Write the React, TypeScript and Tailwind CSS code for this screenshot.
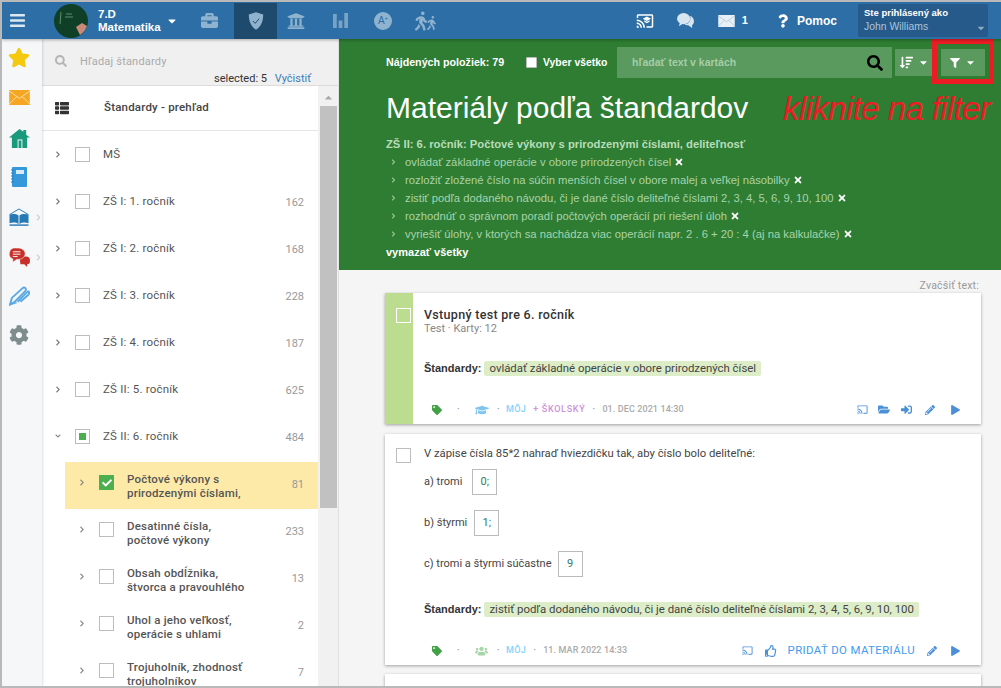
import React from 'react';
import {
  FaBars, FaBriefcase, FaUniversity, FaStar, FaCog,
  FaTag, FaGraduationCap, FaFolderOpen, FaSignInAlt, FaPencilAlt, FaPlay, FaUsers, FaFilter, FaThList,
  FaSearch, FaTimes, FaQuestion, FaCaretDown, FaCheck, FaChevronRight, FaChevronDown, FaWalking,
  FaSortAmountDown, FaRegThumbsUp, FaCaretUp,
} from 'react-icons/fa';
import { MdCast, MdCastForEducation } from 'react-icons/md';

const sans = { fontFamily: '"Liberation Sans", Arial, sans-serif' };

function Avatar() {
  return (
    <svg viewBox="0 0 34 34" className="w-[34px] h-[34px] shrink-0">
      <circle cx="17" cy="17" r="17" fill="#0f3f26" />
      <path d="M7 8 L6 20 M11 13 h8 M12 10 h6" stroke="#5f8f70" strokeWidth="1" fill="none" />
      <path d="M22 23 L28 19 L33 22 A17 17 0 0 1 26 31 Z" fill="#c98a7a" />
    </svg>
  );
}

function ShieldIcon() {
  return (
    <svg viewBox="0 0 20 24" className="w-[16px] h-[20px]">
      <path d="M10 1 L19 4 C19 13 16 19 10 23 C4 19 1 13 1 4 Z" fill="#8fb3cf" />
      <path d="M6 12 l3 3 l5 -6" stroke="#1e4a6e" strokeWidth="1.2" fill="none" />
    </svg>
  );
}

function BarsIcon() {
  return (
    <svg viewBox="0 0 16 16" className="w-[15px] h-[15px]" fill="#77a3c7">
      <rect x="0" y="1" width="4" height="15" />
      <rect x="6" y="8" width="4" height="8" />
      <rect x="12" y="0" width="4" height="16" />
    </svg>
  );
}

function GradeIcon() {
  return (
    <div className="w-[18px] h-[18px] rounded-full bg-[#8fb3cf] flex items-center justify-center text-[10px] leading-none text-[#2c6ea5]" style={sans}>
      A<sup className="text-[6px]">+</sup>
    </div>
  );
}

function MailIcon({ className, fill, line }: { className: string; fill: string; line: string }) {
  return (
    <svg viewBox="0 0 22 16" className={className}>
      <rect width="22" height="16" fill={fill} />
      <path d="M0 1 L11 9 L22 1 M0 15 L8 7 M22 15 L14 7" stroke={line} strokeWidth="1" fill="none" />
    </svg>
  );
}

function HomeIcon() {
  return (
    <svg viewBox="0 0 22 22" className="w-[21px] h-[21px]">
      <path d="M11 1 L15 4 V2 h3 V7 L22 10 H19 V21 H3 V10 H0 Z" fill="#1a9a7c" />
      <rect x="9" y="12" width="5" height="9" fill="#f5f7f9" />
      <rect x="10" y="13" width="3" height="8" fill="#1a9a7c" />
    </svg>
  );
}

function NotebookIcon() {
  return (
    <svg viewBox="0 0 16 20" className="w-[16px] h-[20px]">
      <rect x="1" y="0" width="15" height="20" rx="1" fill="#3498db" />
      <rect x="5" y="3" width="8" height="4" fill="#d6ebf8" />
      <path d="M0 3 h3 M0 6 h3 M0 9 h3 M0 12 h3 M0 15 h3" stroke="#2a7fb8" strokeWidth="1" />
    </svg>
  );
}

function BookIcon() {
  return (
    <svg viewBox="0 0 22 20" className="w-[22px] h-[19px]">
      <path d="M1 7 L11 1 L21 7" stroke="#2579b5" strokeWidth="1" fill="none" />
      <path d="M1 7 C4 6 8 6 10.5 8 V17 C8 15 4 15 1 16 Z M21 7 C18 6 14 6 11.5 8 V17 C14 15 18 15 21 16 Z" fill="#2579b5" />
      <path d="M1 18 h20" stroke="#2579b5" strokeWidth="1.5" />
    </svg>
  );
}

function TalkIcon() {
  return (
    <svg viewBox="0 0 22 20" className="w-[21px] h-[19px]">
      <path d="M11 9 h7 a4 4 0 0 1 4 4 v1 a3 3 0 0 1 -3 3 v3 l-3 -3 h-4 Z" fill="#c8312a" />
      <path d="M7 0 h3 a7 6 0 0 1 0 12 h-2 l-4 3 v-3.5 a6 6 0 0 1 3 -11.5 Z" fill="#c8312a" stroke="#f5f7f9" strokeWidth="0.6" />
      <path d="M4 4 h8 M4 6.5 h8 M4 9 h5" stroke="#fff" strokeWidth="1" />
    </svg>
  );
}

function PenIcon() {
  return (
    <svg viewBox="0 0 22 20" className="w-[21px] h-[20px]" fill="none" stroke="#5aa9e6">
      <path d="M1 19 L3 12 L14 2 C16 0 19 2 17 5 L6 16 Z" strokeWidth="2" />
      <path d="M9 16 L19 6 C21 4 22 7 20 9 L12 16" strokeWidth="2" />
      <path d="M1 19 L8 17" strokeWidth="1.5" />
    </svg>
  );
}

function TalkBubbles() {
  return (
    <svg viewBox="0 0 18 16" className="w-[17px] h-[15px] mr-[24px]" fill="#d7e5f0">
      <ellipse cx="7" cy="6" rx="7" ry="6" />
      <path d="M3 10 L2 14 L7 11 Z" />
      <path d="M14 3 C17 4 18 7 18 9 C18 11 17 12 16 13 L16 16 L12 13 C10 13 9 13 8 12 C12 12 15 9 14 3 Z" />
    </svg>
  );
}

function HeaderTab({ active, width, children }: { active?: boolean; width: string; children: React.ReactNode }) {
  return (
    <div className={`${width} h-[36px] flex items-center justify-center ${active ? 'bg-[#1e4a6e]' : ''}`}>
      {children}
    </div>
  );
}

function Header() {
  return (
    <div className="h-[37px] bg-[#2c6ea5] flex items-center text-white shrink-0 shadow-[0_1px_3px_rgba(0,0,0,0.3)] z-10 relative" style={sans}>
      <div className="w-[52px] pl-[7px]"><FaBars className="w-[17px] h-[17px] text-[#dbe7f1]" /></div>
      <Avatar />
      <div className="ml-[10px] w-[66px] text-[11.5px] font-bold leading-[13px] whitespace-nowrap">
        <div>7.D</div>
        <div>Matematika</div>
      </div>
      <FaCaretDown className="w-[12px] h-[12px] ml-[2px] mr-[10px]" />
      <div className="w-[46px] h-[36px] flex items-center">
        <FaBriefcase className="w-[17px] h-[17px] text-[#8fb3cf] ml-[13px]" />
      </div>
      <HeaderTab active width="w-[43px]"><ShieldIcon /></HeaderTab>
      <HeaderTab width="w-[38px]"><FaUniversity className="w-[18px] h-[18px] text-[#8fb3cf]" /></HeaderTab>
      <HeaderTab width="w-[50px]"><BarsIcon /></HeaderTab>
      <HeaderTab width="w-[36px]"><GradeIcon /></HeaderTab>
      <HeaderTab width="w-[48px]">
        <FaWalking className="w-[12px] h-[20px] text-[#8fb3cf]" />
        <FaWalking className="w-[9px] h-[14px] text-[#8fb3cf] mt-[5px]" />
      </HeaderTab>
      <div className="ml-auto flex items-center">
        <MdCastForEducation className="w-[18px] h-[18px] mr-[23px]" />
        <TalkBubbles />
        <MailIcon className="w-[17px] h-[12px] mr-[7px]" fill="#e8f0f6" line="#a9c5db" />
        <span className="text-[11px] font-bold mr-[30px]">1</span>
        <FaQuestion className="w-[10px] h-[14px] mr-[9px]" />
        <span className="text-[12px] font-bold mr-[21px]">Pomoc</span>
        <div className="w-[130px] h-[33px] mr-[13px] bg-[#255a8a] rounded-[2px] px-[6px] relative">
          <div className="text-[9.5px] font-bold leading-[12px] pt-[3px]">Ste prihlásený ako</div>
          <div className="text-[10.4px] leading-[14px] text-[#a9c5db] pt-[1px]">John Williams</div>
          <FaCaretDown className="absolute right-[2px] bottom-[4px] w-[10px] h-[10px] text-[#8fa9bf]" />
        </div>
      </div>
    </div>
  );
}

function RailItem({ height, more, children }: { height: string; more?: boolean; children: React.ReactNode }) {
  return (
    <div className={`${height} w-full flex items-center justify-center relative`}>
      {children}
      {more && <FaChevronRight className="absolute right-[-5px] w-[5px] h-[7px] text-[#ccc]" />}
    </div>
  );
}

function Rail() {
  return (
    <div className="w-[40px] shrink-0 bg-[#f5f7f9] flex flex-col shadow-[1px_0_2px_rgba(0,0,0,0.12)] z-[1] pr-[6px]">
      <RailItem height="h-[37px]"><FaStar className="w-[22px] h-[21px] text-[#f5c910]" /></RailItem>
      <RailItem height="h-[42px]"><MailIcon className="w-[21px] h-[15px]" fill="#f5a623" line="#fde3b5" /></RailItem>
      <RailItem height="h-[40px]"><HomeIcon /></RailItem>
      <RailItem height="h-[38px]"><NotebookIcon /></RailItem>
      <RailItem height="h-[42px]" more><BookIcon /></RailItem>
      <RailItem height="h-[38px]" more><TalkIcon /></RailItem>
      <RailItem height="h-[40px]"><PenIcon /></RailItem>
      <RailItem height="h-[38px]"><FaCog className="w-[20px] h-[20px] text-[#7f8c8d]" /></RailItem>
    </div>
  );
}

function Box({ checked, partial }: { checked?: boolean; partial?: boolean }) {
  if (checked) {
    return (
      <div className="w-[15px] h-[15px] bg-[#4caf50] flex items-center justify-center shrink-0">
        <FaCheck className="w-[10px] h-[10px] text-white" />
      </div>
    );
  }
  return (
    <div className="w-[15px] h-[15px] border border-[#bdbdbd] bg-white flex items-center justify-center shrink-0">
      {partial && <div className="w-[7px] h-[7px] bg-[#4caf50]" />}
    </div>
  );
}

const grades = [
  { label: 'MŠ', count: '' },
  { label: 'ZŠ I: 1. ročník', count: '162' },
  { label: 'ZŠ I: 2. ročník', count: '168' },
  { label: 'ZŠ I: 3. ročník', count: '228' },
  { label: 'ZŠ I: 4. ročník', count: '187' },
  { label: 'ZŠ II: 5. ročník', count: '625' },
];

const topics = [
  { lines: ['Počtové výkony s', 'prirodzenými číslami,'], count: '81', active: true },
  { lines: ['Desatinné čísla,', 'počtové výkony'], count: '233' },
  { lines: ['Obsah obdĺžnika,', 'štvorca a pravouhlého'], count: '13' },
  { lines: ['Uhol a jeho veľkosť,', 'operácie s uhlami'], count: '2' },
  { lines: ['Trojuholník, zhodnosť', 'trojuholníkov'], count: '7' },
];

function GradeRow({ label, count, open, partial }: { label: string; count: string; open?: boolean; partial?: boolean }) {
  return (
    <div className="h-[47px] flex items-start pl-[13px] pr-[14px] pt-[16px]">
      {open
        ? <FaChevronDown className="w-[6px] h-[6px] mt-[4px] text-[#777] mr-[14px]" />
        : <FaChevronRight className="w-[6px] h-[7px] mt-[4px] text-[#777] mr-[14px]" />}
      <Box partial={partial} />
      <span className="ml-[13px] text-[11.5px] leading-[14px] text-[#555] tracking-[0.2px]">{label}</span>
      <span className="ml-auto text-[11px] leading-[14px] mt-[2px] text-[#999]">{count}</span>
    </div>
  );
}

function TopicRow({ lines, count, active }: { lines: string[]; count: string; active?: boolean }) {
  return (
    <div className={`h-[47px] ml-[23px] flex items-start pl-[14px] pr-[14px] pt-[10px] ${active ? 'bg-[#fdeaa8]' : ''}`}>
      <FaChevronRight className="w-[6px] h-[7px] mt-[7px] text-[#888] mr-[14px]" />
      <div className="mt-[3px]"><Box checked={active} /></div>
      <div className="ml-[13px] text-[11.5px] font-medium leading-[14px] text-[#555] tracking-[0.2px]">
        {lines.map(l => <div key={l}>{l}</div>)}
      </div>
      <span className="ml-auto mt-[6px] text-[11px] leading-[14px] text-[#999]">{count}</span>
    </div>
  );
}

function Sidebar() {
  return (
    <div className="w-[297px] shrink-0 flex flex-col bg-white border-r border-[#e0e0e0]" style={{ fontFamily: 'Roboto, sans-serif' }}>
      <div className="h-[47px] bg-[#f0f0f0] border-b border-[#dcdcdc] relative shrink-0">
        <FaSearch className="absolute left-[13px] top-[16px] w-[12px] h-[12px] text-[#b5b5b5]" />
        <div className="absolute left-[38px] top-[16px] text-[11px] leading-[14px] text-[#aaa] tracking-[0.2px]">Hľadaj štandardy</div>
        <div className="absolute right-[27px] bottom-[-1px] text-[11px] leading-[14px] text-[#333]">
          selected: 5 <span className="ml-[5px] text-[#3b7db8]">Vyčistiť</span>
        </div>
      </div>
      <div className="flex-1 flex min-h-0">
        <div className="flex-1 overflow-hidden">
          <div className="h-[45px] flex items-center pl-[12px] border-b border-[#e5e5e5]">
            <FaThList className="w-[16px] h-[14px] text-[#333]" />
            <span className="ml-[34px] text-[11.5px] font-medium text-[#444] tracking-[0.2px]">Štandardy - prehľad</span>
          </div>
          {grades.map(g => <GradeRow key={g.label} label={g.label} count={g.count} />)}
          <div className="mb-[2px]">
            <GradeRow label="ZŠ II: 6. ročník" count="484" open partial />
          </div>
          {topics.map(t => <TopicRow key={t.count} lines={t.lines} count={t.count} active={t.active} />)}
        </div>
        <div className="w-[20px] shrink-0 bg-[#f1f1f1] flex flex-col items-center">
          <FaCaretUp className="w-[11px] h-[11px] text-[#aaa] mt-[6px] mb-[3px]" />
          <div className="w-[17px] h-[402px] bg-[#c1c1c1]" />
        </div>
      </div>
    </div>
  );
}

const standards = [
  'ovládať základné operácie v obore prirodzených čísel',
  'rozložiť zložené číslo na súčin menších čísel v obore malej a veľkej násobilky',
  'zistiť podľa dodaného návodu, či je dané číslo deliteľné číslami 2, 3, 4, 5, 6, 9, 10, 100',
  'rozhodnúť o správnom poradí počtových operácií pri riešení úloh',
  'vyriešiť úlohy, v ktorých sa nachádza viac operácií napr. 2 . 6 + 20 : 4 (aj na kalkulačke)',
];

function GreenPanel() {
  return (
    <div className="h-[231px] bg-[#2e7d32] pl-[47px] relative shrink-0" style={sans}>
      <div className="flex items-center pt-[8px] h-[39px]">
        <span className="text-[10.7px] font-bold text-white w-[140px]">Nájdených položiek: 79</span>
        <span className="w-[11px] h-[11px] bg-white border border-[#bbb] rounded-[1px] shrink-0" />
        <span className="ml-[6px] text-[10.4px] font-bold text-white w-[74px]">Vyber všetko</span>
        <div className="w-[275px] h-[31px] bg-[#5a9a5e] flex items-center pl-[15px] pr-[9px] shrink-0">
          <span className="text-[10.5px] font-bold text-[#a6cda8]">hľadať text v kartách</span>
          <FaSearch className="ml-auto w-[16px] h-[16px] text-black" />
        </div>
        <div className="ml-[3px] w-[38px] h-[27px] bg-[#5a9a5e] flex items-center justify-center gap-[5px]">
          <FaSortAmountDown className="w-[13px] h-[13px] text-white" />
          <FaCaretDown className="w-[11px] h-[11px] text-white" />
        </div>
        <div className="ml-[8px] w-[44px] h-[27px] bg-[#5a9a5e] flex items-center justify-center gap-[5px]">
          <FaFilter className="w-[10px] h-[10px] text-white" />
          <FaCaretDown className="w-[11px] h-[11px] text-white" />
        </div>
      </div>
      <h1 className="mt-[12px] text-[30px] leading-[36px] text-white font-normal">Materiály podľa štandardov</h1>
      <div className="mt-[9px] text-[11.25px] font-bold leading-[18px] text-[#b9dcb9]">
        ZŠ II: 6. ročník: Počtové výkony s prirodzenými číslami, deliteľnosť
      </div>
      {standards.map(s => (
        <div key={s} className="flex items-center text-[11.25px] leading-[18px] text-[#a9d3ab]">
          <FaChevronRight className="w-[5px] h-[6px] ml-[5px] mr-[9px] shrink-0" />
          <span>{s}</span>
          <FaTimes className="w-[10px] h-[10px] ml-[3px] text-white" />
        </div>
      ))}
      <div className="text-[11px] font-bold leading-[18px] text-white">vymazať všetky</div>

      <div className="absolute left-[593px] top-0 w-[62px] h-[45px] border-[5px] border-[#ed1c24]" />
      <div className="absolute left-[444px] top-[50px] text-[33px] leading-[40px] italic text-[#ed1c24] whitespace-nowrap tracking-[-0.6px]" style={sans}>
        kliknite na filter
      </div>
    </div>
  );
}

function Chip({ children }: { children: React.ReactNode }) {
  return <span className="inline-block bg-[#dcedc8] rounded-[2px] px-[5px] leading-[15px] text-[#444] text-[11.4px]">{children}</span>;
}

function Answer({ label, value, gap }: { label: string; value: string; gap: string }) {
  return (
    <div className="flex items-center h-[26px] mb-[15px]">
      <span>{label}</span>
      <span className={`${gap} w-[25px] h-[26px] border border-[#bbb] flex items-center justify-center text-[#37795b]`}>{value}</span>
    </div>
  );
}

function Cards() {
  return (
    <div className="flex-1 bg-[#f5f5f5] pl-[46px] pr-[20px] overflow-hidden min-h-0" style={{ fontFamily: 'Roboto, sans-serif' }}>
      <div className="h-[24px] -mb-[1px] flex items-end justify-end text-[10.5px] text-[#999] pr-[2px] tracking-[0.2px]">Zvačšiť text:</div>

      <div className="h-[131px] bg-white shadow-[0_1px_3px_rgba(0,0,0,0.35)] flex">
        <div className="w-[28px] bg-[#bcdc90] pt-[15px] pl-[11px] shrink-0">
          <div className="w-[15px] h-[15px] border border-white" />
        </div>
        <div className="flex-1 pl-[11px] flex flex-col">
          <div className="pt-[14px] text-[12.5px] font-medium leading-[16px] text-[#333] tracking-[0.3px]">Vstupný test pre 6. ročník</div>
          <div className="text-[11px] leading-[12px] text-[#888]">Test · Karty: 12</div>
          <div className="mt-[25px] text-[11px] flex items-center">
            <span className="font-bold text-[#333] mr-[3px]" style={sans}>Štandardy:</span>
            <Chip>ovládať základné operácie v obore prirodzených čísel</Chip>
          </div>
          <div className="mt-auto h-[29px] flex items-center pl-[8px] pr-[21px] text-[9px] font-medium tracking-[0.4px]">
            <FaTag className="w-[10px] h-[10px] text-[#43a047]" />
            <span className="mx-[15px] text-[#888]">·</span>
            <FaGraduationCap className="w-[14px] h-[12px] text-[#81c4ec]" />
            <span className="ml-[8px] mr-[6px] text-[#888]">·</span>
            <span className="text-[#81d4fa]">MÔJ</span>
            <span className="ml-[7px] text-[#ce93d8] tracking-[0.7px]">+ ŠKOLSKÝ</span>
            <span className="mx-[7px] text-[#888]">·</span>
            <span className="text-[#aaa] tracking-[0.1px]">01. DEC 2021 14:30</span>
            <div className="ml-auto flex items-center text-[#4a90d9]">
              <MdCast className="w-[11px] h-[11px]" />
              <FaFolderOpen className="w-[12px] h-[11px] ml-[10px]" />
              <FaSignInAlt className="w-[11px] h-[11px] ml-[11px]" />
              <FaPencilAlt className="w-[10px] h-[10px] ml-[13px]" />
              <FaPlay className="w-[9px] h-[10px] ml-[16px]" />
            </div>
          </div>
        </div>
      </div>

      <div className="mt-[10px] h-[231px] bg-white shadow-[0_1px_3px_rgba(0,0,0,0.35)] flex">
        <div className="w-[28px] pt-[14px] pl-[11px] shrink-0">
          <div className="w-[15px] h-[15px] border border-[#bdbdbd]" />
        </div>
        <div className="flex-1 pl-[11px] flex flex-col text-[11px] text-[#444]">
          <div className="pt-[13px] leading-[14px] mb-[8px] text-[11.3px]">V zápise čísla 85*2 nahraď hviezdičku tak, aby číslo bolo deliteľné:</div>
          <Answer label="a) tromi" value="0;" gap="ml-[10px]" />
          <Answer label="b) štyrmi" value="1;" gap="ml-[7px]" />
          <Answer label="c) tromi a štyrmi súčastne" value="9" gap="ml-[6px]" />
          <div className="mt-[9px] flex items-center">
            <span className="font-bold text-[#333] mr-[3px]" style={sans}>Štandardy:</span>
            <Chip>zistiť podľa dodaného návodu, či je dané číslo deliteľné číslami 2, 3, 4, 5, 6, 9, 10, 100</Chip>
          </div>
          <div className="mt-auto h-[28px] flex items-center pl-[8px] pr-[21px] text-[9px] font-medium tracking-[0.4px]">
            <FaTag className="w-[10px] h-[10px] text-[#43a047]" />
            <span className="mx-[15px] text-[#888]">·</span>
            <FaUsers className="w-[13px] h-[10px] text-[#a5d6a7]" />
            <span className="ml-[9px] mr-[6px] text-[#888]">·</span>
            <span className="text-[#81d4fa]">MÔJ</span>
            <span className="mx-[7px] text-[#888]">·</span>
            <span className="text-[#aaa] tracking-[0.1px]">11. MAR 2022 14:33</span>
            <div className="ml-auto flex items-center text-[#4a90d9]">
              <MdCast className="w-[11px] h-[11px]" />
              <FaRegThumbsUp className="w-[12px] h-[12px] ml-[12px]" />
              <span className="ml-[11px] text-[11.4px] font-normal text-[#3f9cf0]">PRIDAŤ DO MATERIÁLU</span>
              <FaPencilAlt className="w-[10px] h-[10px] ml-[12px]" />
              <FaPlay className="w-[9px] h-[10px] ml-[14px]" />
            </div>
          </div>
        </div>
      </div>

      <div className="mt-[9px] h-[40px] bg-white shadow-[0_1px_3px_rgba(0,0,0,0.35)]" />
    </div>
  );
}

export default function App() {
  return (
    <div className="w-[1001px] h-[688px] overflow-hidden flex flex-col bg-white border-y-2 border-l-2 border-[#b9b9b9]">
      <Header />
      <div className="flex-1 flex min-h-0">
        <Rail />
        <Sidebar />
        <div className="flex-1 flex flex-col min-w-0">
          <GreenPanel />
          <Cards />
        </div>
      </div>
    </div>
  );
}
